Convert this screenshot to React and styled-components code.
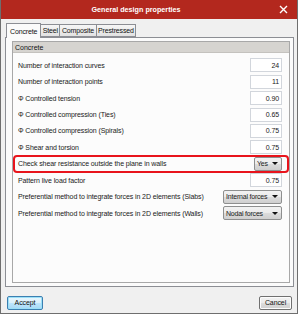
import styled, { createGlobalStyle } from 'styled-components';

const GlobalStyle = createGlobalStyle`
  * {
    box-sizing: border-box;
  }
  body {
    margin: 0;
    padding: 0;
    background: #ffffff;
    font-family: "Liberation Sans", Arial, sans-serif;
  }
`;

const Window = styled.div`
  width: 298px;
  height: 314px;
  display: flex;
  flex-direction: column;
  background: #ebeae7;
  border: 1px solid #6e6e6e;
  border-top: none;
`;

const TitleBar = styled.div`
  height: 19px;
  flex-shrink: 0;
  display: flex;
  align-items: center;
  justify-content: center;
  position: relative;
  background: #b3281e;
  color: #ffffff;
  font-size: 7.2px;
  font-weight: bold;
  padding-right: 26px;
`;

const CloseButton = styled.div`
  position: absolute;
  right: 9px;
  top: 5px;
  width: 9px;
  height: 9px;
  display: flex;
  align-items: center;
  justify-content: center;
`;

const Body = styled.div`
  flex: 1;
  display: flex;
  flex-direction: column;
  padding: 3px 3px 0 4px;
  background: #f0f0f0;
`;

const TabRow = styled.div`
  display: flex;
  align-items: flex-end;
  height: 15px;
  padding-left: 1px;
  position: relative;
  z-index: 1;
`;

const Tab = styled.div`
  height: ${p => (p.$active ? '15px' : '13px')};
  margin-bottom: ${p => (p.$active ? '-1px' : '0')};
  padding: 0 ${p => (p.$active ? '3px' : '1.5px')};
  display: flex;
  align-items: center;
  font-size: 7px;
  letter-spacing: -0.15px;
  color: #111;
  border: 1px solid #8c8e94;
  border-bottom: ${p => (p.$active ? 'none' : '1px solid #8c8e94')};
  margin-left: ${p => (p.$active ? '0' : '-1px')};
  background: ${p =>
    p.$active ? '#fbfbfb' : 'linear-gradient(#f6f6f6, #e2e2e2)'};
`;

const TabPanel = styled.div`
  height: 250px;
  border: 1px solid #8c8e94;
  background: #fbfbfb;
  padding: 3px 3px 3px 6px;
  display: flex;
`;

const GroupBox = styled.div`
  flex: 1;
  display: flex;
  flex-direction: column;
  border: 1px solid #a8a8a8;
  background: #fcfcfc;
`;

const GroupHeader = styled.div`
  height: 11px;
  display: flex;
  align-items: center;
  padding-left: 2px;
  background: #d6d4d0;
  font-size: 7px;
  color: #111;
  border-bottom: 1px solid #c4c2be;
`;

const Rows = styled.div`
  display: flex;
  flex-direction: column;
  padding: 4px 7px 0 1px;
`;

const Row = styled.div`
  height: 16.45px;
  display: flex;
  align-items: center;
  justify-content: space-between;
  padding-left: 4px;
  font-size: 7px;
  letter-spacing: -0.1px;
  white-space: nowrap;
  color: #1a1a1a;
  border-radius: 3px;
  outline: ${p => (p.$highlight ? '2px solid #e8141c' : 'none')};
  outline-offset: -1px;
  margin-right: ${p => (p.$highlight ? '-6px' : '0')};
  padding-right: ${p => (p.$highlight ? '6px' : '0')};
`;

const ValueBox = styled.div`
  width: 32px;
  height: 14px;
  display: flex;
  align-items: center;
  justify-content: flex-end;
  padding-right: 2px;
  background: #ffffff;
  border: 1px solid #d2d6dc;
  color: #1a1a1a;
`;

const Select = styled.div`
  width: ${p => p.$width}px;
  height: 14px;
  flex-shrink: 0;
  display: flex;
  align-items: center;
  justify-content: space-between;
  padding: 0 3px 0 2px;
  white-space: nowrap;
  letter-spacing: -0.2px;
  color: #1a1a1a;
  border: 1px solid #8e8f8f;
  border-radius: 2px;
  background: linear-gradient(#f2f2f2 0%, #ebebeb 50%, #dcdcdc 51%, #cfcfcf 100%);
`;

const Arrow = styled.span`
  width: 0;
  height: 0;
  flex-shrink: 0;
  border-left: 3px solid transparent;
  border-right: 3px solid transparent;
  border-top: 3px solid #111;
`;

const Footer = styled.div`
  flex: 1;
  display: flex;
  align-items: center;
  justify-content: space-between;
  padding: 5px 2px 0 2px;
`;

const Button = styled.div`
  width: ${p => p.$width}px;
  height: 14px;
  display: flex;
  align-items: center;
  justify-content: center;
  font-size: 7px;
  letter-spacing: -0.1px;
  color: #111;
  border-radius: 2px;
  border: 1px solid ${p => (p.$focused ? '#3c7fb1' : '#707070')};
  box-shadow: ${p => (p.$focused ? 'inset 0 0 0 1px #9be0f8' : 'inset 0 0 0 1px #fcfcfc')};
  background: ${p =>
    p.$focused
      ? 'linear-gradient(#eaf6fd 0%, #d9f0fc 50%, #bee6fd 51%, #a7d9f5 100%)'
      : 'linear-gradient(#f2f2f2 0%, #ebebeb 50%, #dddddd 51%, #cfcfcf 100%)'};
`;

const rows = [
  { label: 'Number of interaction curves', value: '24' },
  { label: 'Number of interaction points', value: '11' },
  { label: 'Φ Controlled tension', value: '0.90' },
  { label: 'Φ Controlled compression (Ties)', value: '0.65' },
  { label: 'Φ Controlled compression (Spirals)', value: '0.75' },
  { label: 'Φ Shear and torsion', value: '0.75' },
  { label: 'Check shear resistance outside the plane in walls', select: 'Yes', width: 28, highlight: true },
  { label: 'Pattern live load factor', value: '0.75' },
  { label: 'Preferential method to integrate forces in 2D elements (Slabs)', select: 'Internal forces', width: 59 },
  { label: 'Preferential method to integrate forces in 2D elements (Walls)', select: 'Nodal forces', width: 59 },
];

export default function App() {
  return (
    <>
      <GlobalStyle />
      <Window>
        <TitleBar>
          General design properties
          <CloseButton>
            <svg width="9" height="9" viewBox="0 0 9 9">
              <path d="M1 1 L8 8 M8 1 L1 8" stroke="#ffffff" strokeWidth="1.4" />
            </svg>
          </CloseButton>
        </TitleBar>
        <Body>
          <TabRow>
            <Tab $active>Concrete</Tab>
            <Tab>Steel</Tab>
            <Tab>Composite</Tab>
            <Tab>Prestressed</Tab>
          </TabRow>
          <TabPanel>
            <GroupBox>
              <GroupHeader>Concrete</GroupHeader>
              <Rows>
                {rows.map(r => (
                  <Row key={r.label} $highlight={r.highlight}>
                    <span>{r.label}</span>
                    {r.select ? (
                      <Select $width={r.width}>
                        <span>{r.select}</span>
                        <Arrow />
                      </Select>
                    ) : (
                      <ValueBox>{r.value}</ValueBox>
                    )}
                  </Row>
                ))}
              </Rows>
            </GroupBox>
          </TabPanel>
          <Footer>
            <Button $width={36} $focused>Accept</Button>
            <Button $width={33}>Cancel</Button>
          </Footer>
        </Body>
      </Window>
    </>
  );
}
